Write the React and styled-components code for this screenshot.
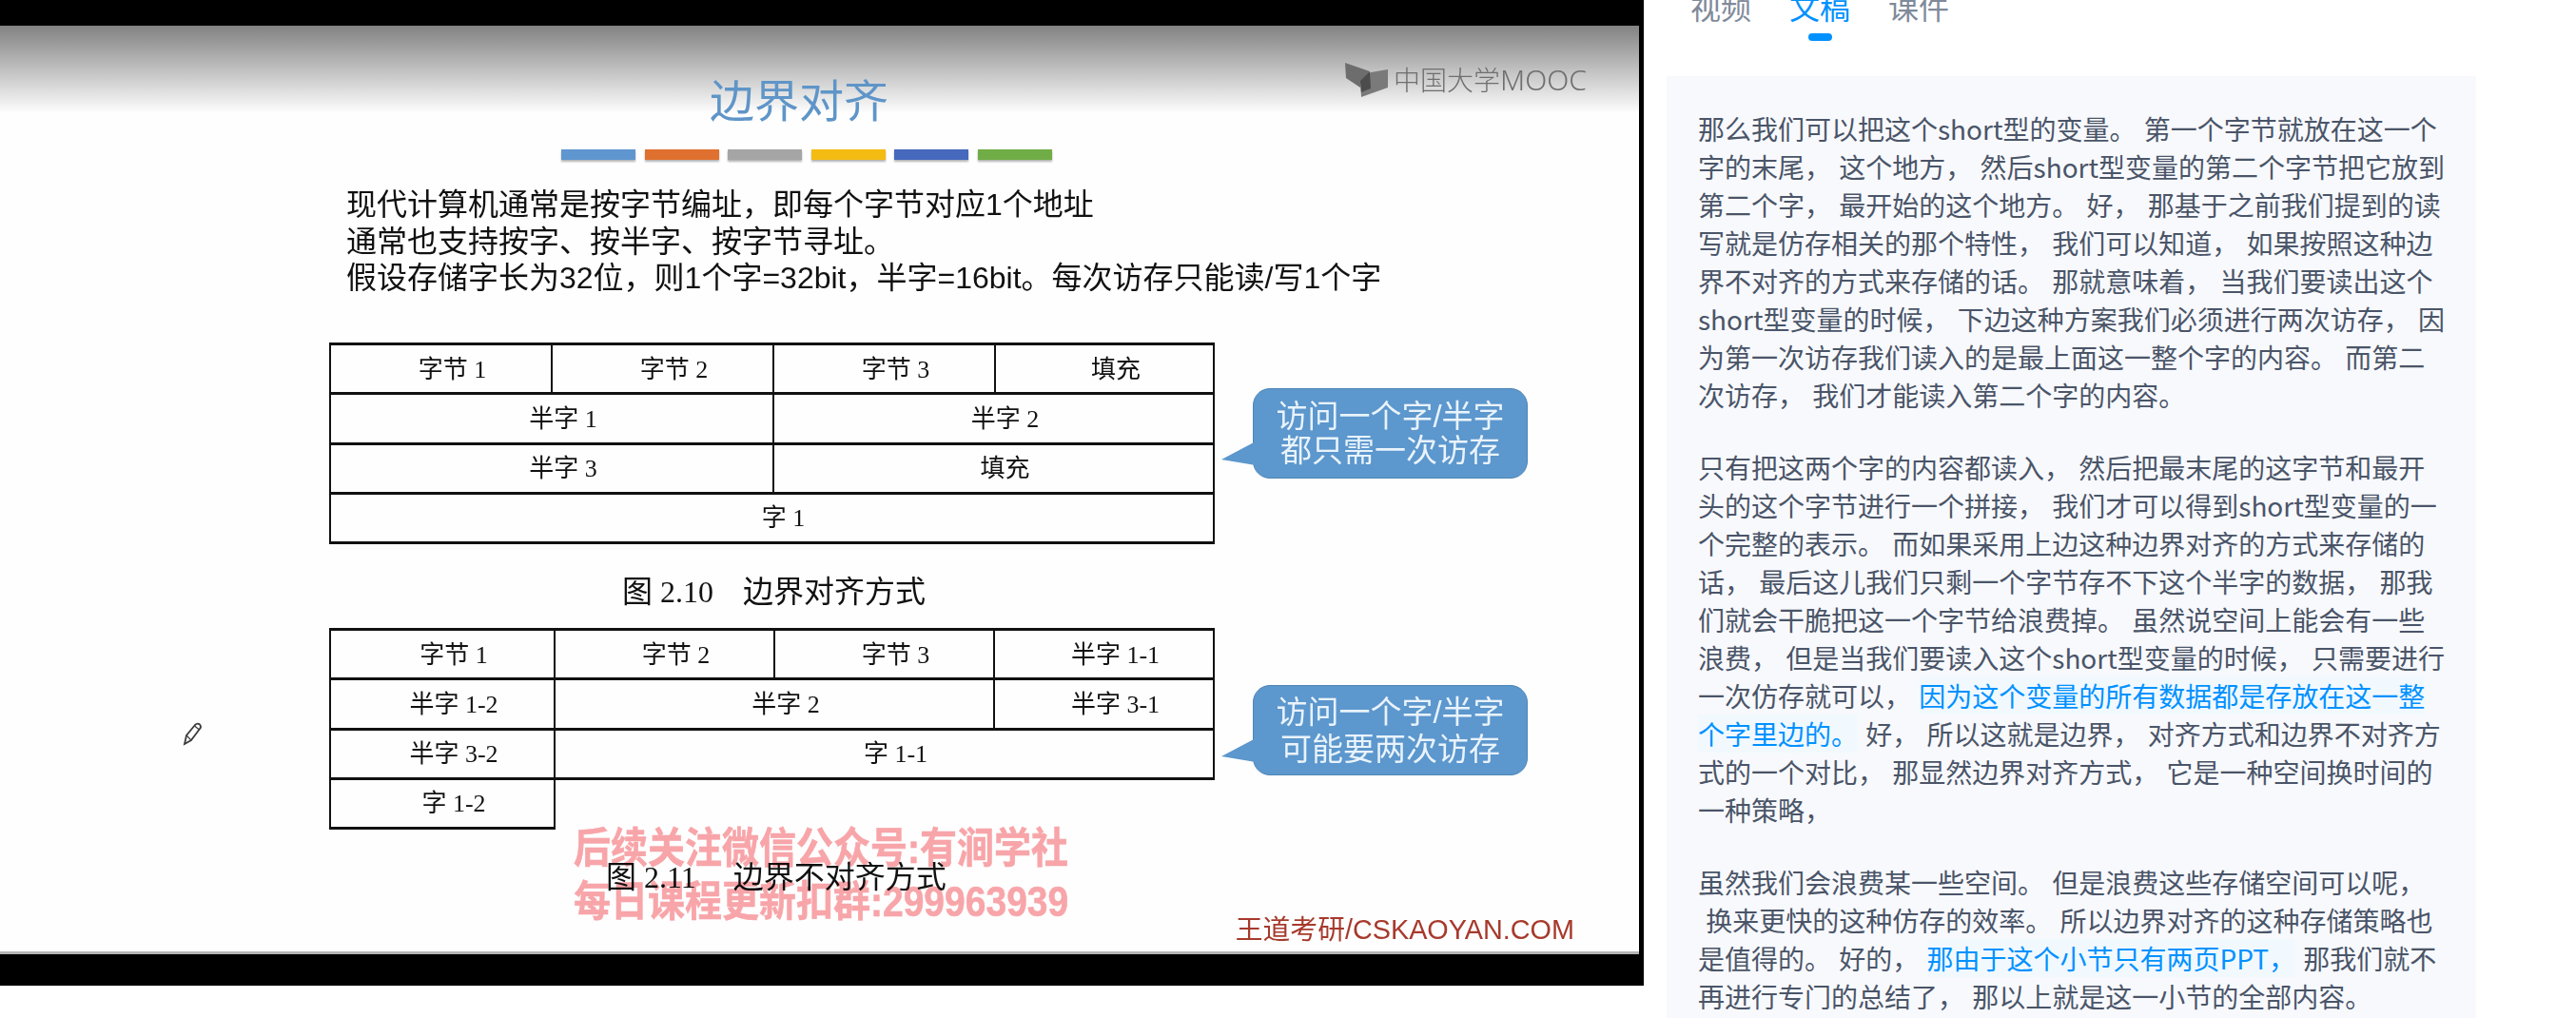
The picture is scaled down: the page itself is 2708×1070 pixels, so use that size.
import React from "react";
import styled, { createGlobalStyle } from "styled-components";

const Global = createGlobalStyle`
  html, body { margin: 0; padding: 0; background: #fff; }
  body { width: 2708px; height: 1070px; overflow: hidden; font-family: "Noto Sans CJK SC", "Noto Sans", sans-serif; }
  * { box-sizing: border-box; }
`;

const Page = styled.div`
  display: flex;
  width: 2708px;
  height: 1070px;
  overflow: hidden;
  align-items: flex-start;
`;

const VideoPane = styled.div`
  flex: 0 0 1728px;
  height: 1036px;
  background: #000;
  padding: 27px 5px 33px 0;
`;

const Slide = styled.div`
  position: relative;
  height: 976px;
  padding: 48px 0 0 346px;
  border-bottom: 3px solid #b5b5b5;
  background: linear-gradient(#828282 0, #fefefe 92px);
  filter: blur(0.55px);
  overflow: hidden;
`;

const Title = styled.h1`
  margin: 0 0 0 400px;
  font: 400 47px/56px "Noto Sans CJK SC", sans-serif;
  color: #5f95c8;
`;

const Bars = styled.div`
  display: flex;
  gap: 9.6px;
  margin: 26px 0 0 244px;
`;

const Bar = styled.span`
  width: 78px;
  height: 11px;
  background: ${(p) => p.$color};
  box-shadow: 0 2px 2px rgba(0, 0, 0, 0.3);
`;

const Intro = styled.div`
  margin: 28px 0 0 18px;
  font: 400 32px/38.5px "Liberation Sans", "Noto Sans CJK SC", sans-serif;
  color: #111;
  white-space: nowrap;
`;

const FigureRow = styled.div`
  display: flex;
  align-items: flex-start;
  gap: 40px;
  margin-top: ${(p) => p.$top}px;
`;

const MemoryTable = styled.div`
  display: grid;
  flex: 0 0 931px;
  grid-template-columns: ${(p) => p.$columns};
  grid-auto-rows: 52.25px;
  border-top: 3px solid #111;
  border-left: 2px solid #111;
`;

const Cell = styled.div`
  grid-column: span ${(p) => p.$span || 1};
  display: flex;
  align-items: center;
  justify-content: center;
  padding: 2px 0 0 24px;
  border-right: 2px solid #111;
  border-bottom: 3px solid #111;
  font: 400 26px/1 "Liberation Serif", "Noto Sans CJK SC", serif;
  color: #111;
  white-space: pre;
`;

const Callout = styled.div`
  position: relative;
  flex: 0 0 289px;
  height: 95px;
  margin-top: ${(p) => p.$top}px;
  border: 1px solid #4f86b6;
  border-radius: 18px;
  background: #5c97cd;
  color: #e9f3fb;
  font: 400 33px/${(p) => p.$leading}px "Liberation Sans", "Noto Sans CJK SC", sans-serif;
  text-align: center;
  display: flex;
  flex-direction: column;
  justify-content: center;

  &::before {
    content: "";
    position: absolute;
    left: -34px;
    top: 55px;
    width: 36px;
    height: 25px;
    background: #5c97cd;
    clip-path: polygon(100% 0, 0 76%, 100% 100%);
  }
`;

const Caption = styled.div`
  margin: ${(p) => p.$top}px 0 0 ${(p) => p.$left}px;
  font: 400 32px/40px "Liberation Serif", "Noto Sans CJK SC", serif;
  color: #111;
  white-space: pre;
`;

const CaptionName = styled.span`
  margin-left: ${(p) => p.$gap}px;
`;

const Logo = styled.div`
  position: absolute;
  left: 1414px;
  top: 38px;
  display: flex;
  align-items: center;
  gap: 6px;
  color: #6f6f6f;
  font: 300 28px/37px "Noto Sans CJK SC", sans-serif;
`;

const LogoLatin = styled.span`
  font-family: "Noto Sans", sans-serif;
  font-weight: 300;
  font-size: 30px;
`;

const Watermark = styled.div`
  position: absolute;
  left: 603px;
  top: 845px;
  width: 530px;
  font: 700 39px/48px "Liberation Sans", "Noto Sans CJK SC", sans-serif;
  color: #f9a6aa;
  mix-blend-mode: multiply;
  white-space: nowrap;
  transform: scaleY(1.15);
  -webkit-text-stroke: 0.5px #f9a6aa;
`;

const Brand = styled.div`
  position: absolute;
  right: 68px;
  bottom: 6px;
  font: 400 28.8px/34px "Liberation Sans", "Noto Sans CJK SC", sans-serif;
  color: #a63a2c;
  white-space: nowrap;
`;

const Pencil = styled.svg`
  position: absolute;
  left: 192px;
  top: 731px;
`;

const Side = styled.div`
  flex: 1;
  min-width: 0;
  padding-left: 24px;
`;

const Tabs = styled.div`
  display: flex;
  gap: 40px;
  margin: -14px 0 0 25px;
`;

const Tab = styled.div`
  display: flex;
  flex-direction: column;
  align-items: center;
  width: 64px;
  font: 400 32px/40px "Noto Sans CJK SC", sans-serif;
  color: ${(p) => (p.$active ? "#0091ff" : "#7f8a9a")};
`;

const TabMark = styled.span`
  width: 25px;
  height: 8px;
  margin-top: 9px;
  border-radius: 4px;
  background: ${(p) => (p.$active ? "#0091ff" : "transparent")};
`;

const Transcript = styled.div`
  width: 851px;
  height: 1000px;
  margin-top: 37px;
  padding: 35px 0 0 33px;
  background: #f8f9fd;
  font: 400 28px/40px "Noto Sans CJK SC", sans-serif;
  color: #4a5568;
  word-spacing: 2px;
`;

const Paragraph = styled.div`
  & + & { margin-top: 36px; }
`;

const Line = styled.div`
  white-space: pre;
`;

const Mark = styled.span`
  color: #0091ff;
  background: #f1f9ff;
`;

const barColors = ["#5f96cf", "#e0702f", "#a5a5a5", "#f4bb12", "#4668bd", "#71ad47"];

const table1 = [
  ["字节 1"], ["字节 2"], ["字节 3"], ["填充"],
  ["半字 1", 2], ["半字 2", 2],
  ["半字 3", 2], ["填充", 2],
  ["字 1", 4],
];

const table2 = [
  ["字节 1"], ["字节 2"], ["字节 3"], ["半字 1-1"],
  ["半字 1-2"], ["半字 2", 2], ["半字 3-1"],
  ["半字 3-2"], ["字 1-1", 3],
  ["字 1-2"],
];

const cells = (rows) =>
  rows.map(([text, span], i) => (
    <Cell key={i} $span={span}>
      {text}
    </Cell>
  ));

export default function App() {
  return (
    <Page>
      <Global />
      <VideoPane>
        <Slide>
          <Logo>
            <svg width="45" height="37" viewBox="0 0 45 37">
              <polygon points="0,1 26,10 16,22 16,27 1,17" fill="#6d6d6d" />
              <polygon points="16,20 27,11 45,8 45,27 17,37" fill="#7a7a7a" />
              <polygon points="16,20 26,10 27,28 17,32" fill="#4c4c4c" />
            </svg>
            <span>
              中国大学<LogoLatin>MOOC</LogoLatin>
            </span>
          </Logo>
          <Title>边界对齐</Title>
          <Bars>
            {barColors.map((c) => (
              <Bar key={c} $color={c} />
            ))}
          </Bars>
          <Intro>
            <div>现代计算机通常是按字节编址，即每个字节对应1个地址</div>
            <div>通常也支持按字、按半字、按字节寻址。</div>
            <div>假设存储字长为32位，则1个字=32bit，半字=16bit。每次访存只能读/写1个字</div>
          </Intro>
          <FigureRow $top={48.5}>
            <MemoryTable $columns="233px 233px 233px 230px">{cells(table1)}</MemoryTable>
            <Callout $top={48} $leading={36}>
              <div>访问一个字/半字</div>
              <div>都只需一次访存</div>
            </Callout>
          </FigureRow>
          <Caption $top={30} $left={308}>
            图 2.10<CaptionName $gap={31}>边界对齐方式</CaptionName>
          </Caption>
          <FigureRow $top={18}>
            <MemoryTable $columns="236px 231px 231px 231px">{cells(table2)}</MemoryTable>
            <Callout $top={60} $leading={39}>
              <div>访问一个字/半字</div>
              <div>可能要两次访存</div>
            </Callout>
          </FigureRow>
          <Caption $top={30} $left={291}>
            图 2.11<CaptionName $gap={39}>边界不对齐方式</CaptionName>
          </Caption>
          <Watermark>
            <div>后续关注微信公众号:有涧学社</div>
            <div>每日课程更新扣群:299963939</div>
          </Watermark>
          <Brand>王道考研/CSKAOYAN.COM</Brand>
          <Pencil width="22" height="26" viewBox="0 0 22 26" fill="none" stroke="#3c3c3c" strokeWidth="1.8">
            <path d="M2 24 L4 15 L13 4 Q15.5 1.5 18 3.5 Q20 6 18 8 L9 20 Z" />
            <path d="M4 15 L9 20 M12.5 5 L17.5 9" strokeWidth="1.2" />
          </Pencil>
        </Slide>
      </VideoPane>
      <Side>
        <Tabs>
          <Tab>
            视频
            <TabMark />
          </Tab>
          <Tab $active>
            文稿
            <TabMark $active />
          </Tab>
          <Tab>
            课件
            <TabMark />
          </Tab>
        </Tabs>
        <Transcript>
          <Paragraph>
            <Line>那么我们可以把这个short型的变量。 第一个字节就放在这一个</Line>
            <Line>字的末尾， 这个地方， 然后short型变量的第二个字节把它放到</Line>
            <Line>第二个字， 最开始的这个地方。 好， 那基于之前我们提到的读</Line>
            <Line>写就是仿存相关的那个特性， 我们可以知道， 如果按照这种边</Line>
            <Line>界不对齐的方式来存储的话。 那就意味着， 当我们要读出这个</Line>
            <Line>short型变量的时候， 下边这种方案我们必须进行两次访存， 因</Line>
            <Line>为第一次访存我们读入的是最上面这一整个字的内容。 而第二</Line>
            <Line>次访存， 我们才能读入第二个字的内容。</Line>
          </Paragraph>
          <Paragraph>
            <Line>只有把这两个字的内容都读入， 然后把最末尾的这字节和最开</Line>
            <Line>头的这个字节进行一个拼接， 我们才可以得到short型变量的一</Line>
            <Line>个完整的表示。 而如果采用上边这种边界对齐的方式来存储的</Line>
            <Line>话， 最后这儿我们只剩一个字节存不下这个半字的数据， 那我</Line>
            <Line>们就会干脆把这一个字节给浪费掉。 虽然说空间上能会有一些</Line>
            <Line>浪费， 但是当我们要读入这个short型变量的时候， 只需要进行</Line>
            <Line>
              一次仿存就可以， <Mark>因为这个变量的所有数据都是存放在这一整</Mark>
            </Line>
            <Line>
              <Mark>个字里边的。</Mark> 好， 所以这就是边界， 对齐方式和边界不对齐方
            </Line>
            <Line>式的一个对比， 那显然边界对齐方式， 它是一种空间换时间的</Line>
            <Line>一种策略，</Line>
          </Paragraph>
          <Paragraph>
            <Line>虽然我们会浪费某一些空间。 但是浪费这些存储空间可以呢，</Line>
            <Line> 换来更快的这种仿存的效率。 所以边界对齐的这种存储策略也</Line>
            <Line>
              是值得的。 好的， <Mark>那由于这个小节只有两页PPT，</Mark> 那我们就不
            </Line>
            <Line>再进行专门的总结了， 那以上就是这一小节的全部内容。</Line>
          </Paragraph>
        </Transcript>
      </Side>
    </Page>
  );
}
